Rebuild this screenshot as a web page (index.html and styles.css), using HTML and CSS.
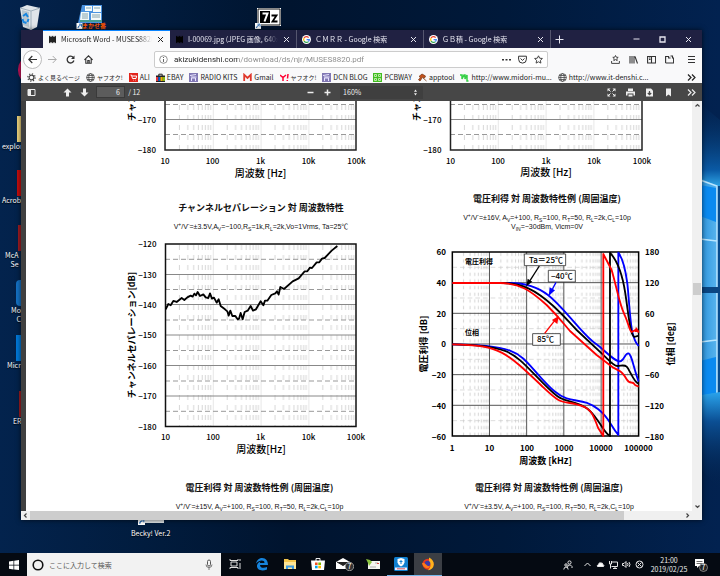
FILE: index.html
```html
<!DOCTYPE html>
<html lang="ja">
<head>
<meta charset="utf-8">
<title>MUSES8820.pdf</title>
<link rel="stylesheet" href="styles.css">
</head>
<body>
<svg class="defs" aria-hidden="true">
  <defs>
    <symbol id="chip" viewBox="0 0 9 9"><path d="M1 2h7v5H1z"/><path d="M1 1.400h7M1 7.600h7" stroke="currentColor" stroke-dasharray="1 .5"/></symbol>
    <symbol id="close" viewBox="0 0 9 9"><path d="M2 2l5 5M7 2L2 7" fill="none" stroke="currentColor"/></symbol>
    <symbol id="google" viewBox="0 0 9 9"><circle cx="4.500" cy="4.500" r="4.500" fill="#fff"/><g fill="none" stroke-width="1.300"><path d="M6.600 2.600A2.800 2.800 0 0 0 2.100 3" stroke="#ea4335"/><path d="M2.100 3a2.800 2.800 0 0 0 0 3" stroke="#fbbc05"/><path d="M2.100 6a2.800 2.800 0 0 0 4.400.6" stroke="#34a853"/><path d="M6.500 6.600q.8-.8.8-2H4.600" stroke="#4285f4"/></g></symbol>
    <symbol id="globe" viewBox="0 0 9 9"><g fill="none" stroke="#444" stroke-width=".8"><circle cx="4.500" cy="4.500" r="3.900"/><ellipse cx="4.500" cy="4.500" rx="1.800" ry="3.900"/><path d="M.6 4.500h7.800M1.200 2.500h6.600M1.200 6.500h6.600"/></g></symbol>
    <symbol id="blog" viewBox="0 0 9 9"><path d="M0 0h9v9H0z" fill="#8178b4"/><path d="M1 2.500l6-1M2 4h5.500M2.500 8V5h4v3" stroke="#e8e4ff" fill="none"/></symbol>
    <symbol id="shortcut" viewBox="0 0 6 6"><path d="M0 0h6v6H0z" fill="#fff"/><path d="M1.500 5q0-2.500 2.500-2.500M2.500 1.200H5v2.500" fill="none" stroke="#2468b0"/></symbol>
    <pattern id="log-grid" width="47.800" height="10" x="165" y="244" patternUnits="userSpaceOnUse">
      <path d="M14.400 1v5M22.800 1v5M28.700 1v5M33.400 1v5M37.200 1v5M40.300 1v5M43.100 1v5M45.600 1v5" stroke="#ccc" stroke-width=".8"/>
      <path d="M.2 0v10" stroke="#ddd"/>
    </pattern>
    <pattern id="log-grid-2" width="47.800" height="10" x="450" y="244" patternUnits="userSpaceOnUse">
      <path d="M14.400 1v5M22.800 1v5M28.700 1v5M33.400 1v5M37.200 1v5M40.300 1v5M43.100 1v5M45.600 1v5" stroke="#ccc" stroke-width=".8"/>
      <path d="M.2 0v10" stroke="#ddd"/>
    </pattern>
    <pattern id="bode-grid" width="111.800" height="20" x="127" y="216" patternUnits="userSpaceOnUse">
      <path d="M33.700 2v10M53.300 2v10M67.300 2v10M78.100 2v10M87 2v10M94.500 2v10M101 2v10M106.700 2v10" stroke="#ccc" stroke-width="2.400"/>
    </pattern>
  </defs>
</svg>

<main class="desktop">
  <svg class="wallpaper" viewBox="684 0 36 553" preserveAspectRatio="none" aria-hidden="true">
    <defs>
      <linearGradient id="beam" x2="0" y2="1"><stop offset="0" stop-color="#03214a" stop-opacity="0"/><stop offset=".8" stop-color="#0a5aa5"/><stop offset="1" stop-color="#37b6f5"/></linearGradient>
      <linearGradient id="below" x2="0" y2="1"><stop offset="0" stop-color="#2aa4ec"/><stop offset=".3" stop-color="#0b4f94"/><stop offset="1" stop-color="#03214a" stop-opacity="0"/></linearGradient>
      <linearGradient id="pane" x2="1" y2="0"><stop offset="0" stop-color="#2b93dc"/><stop offset="1" stop-color="#58b4ee"/></linearGradient>
    </defs>
    <path d="M684 90L720 120V190H684z" fill="url(#beam)"/>
    <path d="M717 186h3v207h-3z" fill="#064a8c"/>
    <path d="M700 178L717 186V288H700z" fill="url(#pane)"/>
    <path d="M700 185l16 3v34l-16-6z" fill="#0a8af0"/>
    <path d="M700 180l17 6v102M700 239l17 2" stroke="#b9e6ff" stroke-width="1.500" fill="none"/>
    <path d="M700 287h20v6h-20z" fill="#0b4682"/>
    <path d="M700 293h17v100l-17 3z" fill="url(#pane)"/>
    <path d="M700 361l16-4v36l-16 3z" fill="#0a8af0"/>
    <path d="M717 293v100M700 342l17-2" stroke="#b9e6ff" stroke-width="1.500"/>
    <path d="M684 398L720 392V490L684 450z" fill="url(#below)"/>
  </svg>

  <div class="shortcut bin"><svg viewBox="0 0 24 26" width="24" height="26"><path d="M2 4L9 1l13 3-3 19-6 3-8-3z" fill="#dfe5e9"/><path d="M2 4l11 3 9-3M13 7v18" stroke="#9fb0bb" fill="none"/><path d="M4 6l7 2v15l-6-2z" fill="#b8c6ce"/><path d="M5 12l3-2 2 3M4.500 15l1 3 3 1M10.500 15l-1 3" stroke="#1686e0" stroke-width="2" fill="none"/></svg></div>
  <div class="shortcut cards"><svg viewBox="0 0 28 24" width="28" height="24"><path d="M6 0h20v18H2z" fill="#4b93e0"/><path d="M9 1h7v5H9zM17 1h8v6h-8zM5 7h8v8H4zM15 8h10v7H15z" fill="#f4fafa"/><path d="M6 9h6M6 11h6M6 13h6M16 10h8M16 12h8M10 3h5M18 3h6" stroke="#6b8d9b" stroke-width=".8"/><path d="M4 16h22" stroke="#42a548"/><use href="#shortcut" x="0" y="18" width="7" height="6"/></svg><span class="orange">まかせ番</span></div>
  <div class="shortcut zip"><svg viewBox="0 0 26 21" width="26" height="21"><path d="M2 0h24v18H2z" fill="#fff"/><path d="M3 1h22v16H3z" stroke="#111" fill="none"/><path d="M5 3h10v12H5z" fill="#000"/><path d="M7.500 5.500h5l-3 8" stroke="#fff" stroke-width="2" fill="none"/><path d="M16.500 7.500h5l-4 6h5" stroke="#000" stroke-width="1.800" fill="none"/><use href="#shortcut" y="15" width="6" height="6"/></svg></div>
  <div class="shortcut s-pink"><i class="art pink"></i></div>
  <div class="shortcut s-explor"><i class="art folder"></i><span>explor</span></div>
  <div class="shortcut s-acro"><i class="art red"></i><span>Acrob</span></div>
  <div class="shortcut s-mcaf"><i class="art crimson"></i><span>McA<br>Se</span></div>
  <div class="shortcut s-moz"><i class="art blue"></i><span>Mo<br>C</span></div>
  <div class="shortcut s-micr"><i class="art azure"></i><span>Micr</span></div>
  <div class="shortcut s-eri"><i class="art crimson"></i><span>ER</span></div>
  <div class="shortcut s-becky"><svg viewBox="0 0 26 12" width="26" height="12"><path d="M7 0h19v8H7z" fill="#dfe3e6"/><use href="#shortcut" y="3" width="7" height="7"/></svg><span>Becky! Ver.2</span></div>

  <section class="window">
    <header class="tabs">
      <div class="tab active"><svg class="ico"><use href="#chip"/></svg><span class="tab-title">Microsoft Word - MUSES8820x</span><button aria-label="閉じる"><svg class="ico"><use href="#close"/></svg></button></div>
      <div class="tab"><svg class="ico dim"><use href="#chip"/></svg><span class="tab-title">I-00069.jpg (JPEG 画像, 640x48</span><button aria-label="閉じる"><svg class="ico"><use href="#close"/></svg></button></div>
      <div class="tab"><svg class="ico"><use href="#google"/></svg><span class="tab-title">ＣＭＲＲ - Google 検索</span><button aria-label="閉じる"><svg class="ico"><use href="#close"/></svg></button></div>
      <div class="tab"><svg class="ico"><use href="#google"/></svg><span class="tab-title">ＧＢ積 - Google 検索</span><button aria-label="閉じる"><svg class="ico"><use href="#close"/></svg></button></div>
      <button class="newtab" aria-label="新しいタブ"><svg class="ico"><path d="M4.500 .5v8M.5 4.500h8" stroke="currentColor" fill="none"/></svg></button>
      <div class="controls">
        <button aria-label="最小化"><svg class="ico"><path d="M1.500 4h6" stroke="currentColor"/></svg></button>
        <button aria-label="最大化"><svg class="ico"><path d="M2 2h5v5H2z" stroke="currentColor" stroke-width="1.300" fill="none"/></svg></button>
        <button aria-label="ウィンドウを閉じる"><svg class="ico"><use href="#close"/></svg></button>
      </div>
    </header>

    <nav class="navbar">
      <button class="back" aria-label="戻る"><svg class="ico"><path d="M9 4.500H.8M4.300 1L.8 4.500 4.300 8" stroke="currentColor" stroke-width="1.200" fill="none"/></svg></button>
      <button class="faint" aria-label="進む"><svg class="ico"><path d="M0 4.500h8.200M4.700 1l3.500 3.500L4.700 8" stroke="currentColor" fill="none"/></svg></button>
      <button aria-label="再読み込み"><svg class="ico"><path d="M7.300 2.500a3.400 3.400 0 1 0 .6 3" stroke="currentColor" stroke-width="1.300" fill="none"/><path d="M8.500 .5v3.500H5z"/></svg></button>
      <button aria-label="ホーム"><svg class="ico"><path d="M.4 4.800L4.500 .8l4.100 4M1.800 4v4.300h5.400V4M3.800 8V5.500h1.400V8" stroke="currentColor" stroke-width="1.100" fill="none"/></svg></button>
      <div class="urlbox">
        <svg class="ico"><circle cx="4.500" cy="4.500" r="3.800" fill="none" stroke="#777" stroke-width=".8"/><path d="M4.500 4v3M4.500 2v1" stroke="#666"/></svg>
        <input type="text" class="url" aria-label="アドレス" value="akizukidenshi.com/download/ds/njr/MUSES8820.pdf">
        <button aria-label="ページ操作"><svg class="ico"><path d="M0 4h2v1.500H0zM3.500 4h2v1.500h-2zM7 4h2v1.500H7z"/></svg></button>
        <button aria-label="Pocket"><svg class="ico"><path d="M.6 1.200h7.800v3a3.900 3.900 0 0 1-7.800 0zM2.500 3.500l2 1.900 2-1.900" stroke="currentColor" fill="none"/></svg></button>
        <button aria-label="ブックマーク"><svg class="ico"><path d="M4.500 .8l1.200 2.400 2.700.3-2 1.900.5 2.700-2.400-1.300-2.400 1.300.5-2.700-2-1.900 2.700-.3z" stroke="currentColor" stroke-width=".9" fill="none"/></svg></button>
      </div>
      <div class="tools">
        <button aria-label="ブックマーク一覧"><svg class="ico"><path d="M4.500 .5l.8 1.700 1.900.2-1.400 1.300.4 1.900-1.700-1-1.700 1 .4-1.900-1.400-1.300 1.900-.2zM.6 6v2.400h7.800V6" stroke="currentColor" stroke-width=".9" fill="none"/></svg></button>
        <button aria-label="ライブラリー"><svg class="ico"><path d="M1 1v7.500M3 1v7.500M5 1v7.500M6 1.500l2.500 7" stroke="currentColor" stroke-width="1.100" fill="none"/></svg></button>
        <button aria-label="サイドバー"><svg class="ico"><path d="M.6 1.500h8v6.500h-8zM4.500 1.500V8M2 3h1.500M2 4.500h1.500" stroke="currentColor" stroke-width="1.100" fill="none"/></svg></button>
        <button aria-label="フォルダー"><svg class="ico"><path d="M.6 8V1.500h3v1.500h2M.6 8h8V3H7M5.500 1h2v2.500" stroke="currentColor" stroke-width="1.100" fill="none"/></svg></button>
        <button class="menu" aria-label="メニュー"><svg class="ico"><path d="M1 1.500h7M1 4.500h7M1 7.500h7" stroke="currentColor" stroke-width="1.100"/></svg></button>
      </div>
    </nav>

    <nav class="bookmarks">
      <a href="#"><svg class="ico"><circle cx="4.500" cy="4.500" r="2.400" stroke="#444" stroke-width="1.200" fill="none"/><circle cx="4.500" cy="4.500" r="3.700" stroke="#444" stroke-width="1.200" stroke-dasharray="1.200 1.700" fill="none"/></svg><span class="ja">よく見るページ</span></a>
      <a href="#"><svg class="ico"><use href="#globe"/></svg><span class="ja">ヤフオク!</span></a>
      <a href="#"><svg class="ico"><path d="M0 0h9v9H0z" fill="#e2231a"/><path d="M1.500 2h1l1 3.500h3.500l.7-2.500H3M4 7.200h.5M6.500 7.200H7" stroke="#fff" fill="none"/></svg>ALI</a>
      <a href="#"><svg class="ico"><path d="M0 2.500h9V9H0z" fill="#222"/><path d="M2.800 3V1.200h3.400V3" stroke="#222" fill="none"/><path d="M0 4h2.300v4H0z" fill="#e53238"/><path d="M2.300 4h2.200v4H2.300z" fill="#0064d2"/><path d="M4.500 4h2.200v4H4.500z" fill="#f5af02"/><path d="M6.700 4H9v4H6.700z" fill="#86b817"/></svg>EBAY</a>
      <a href="#"><svg class="ico"><use href="#blog"/></svg>RADIO KITS</a>
      <a href="#"><svg class="ico"><path d="M1.200 8V1.800L4.500 5l3.300-3.200V8" stroke="#e0392d" stroke-width="1.800" fill="none"/></svg>Gmail</a>
      <a href="#"><svg class="ico"><path d="M0 2l3 2.500L6 2M3 4.500V8M8 1L7.500 5.500M7.300 7v1" stroke="#f03" stroke-width="1.500" fill="none"/></svg><span class="ja">ヤフオク!</span></a>
      <a href="#"><svg class="ico"><use href="#blog"/></svg>DCN BLOG</a>
      <a href="#"><svg class="ico"><path d="M0 0h9v9H0z" fill="#42bd20"/><path d="M1.500 1.500h2v2h-2zM5.500 1.500h2v2h-2zM1.500 5.500h2v2h-2zM5.500 5.500h2v2h-2z" stroke="#d7f5c8" stroke-width=".8" fill="none"/></svg>PCBWAY</a>
      <a href="#"><svg class="ico"><path d="M1 3.500L4 1l3.500 2-1 2-2-.7L2 8 .5 6.800l2-2.300zM5 5l3.500 3" fill="#c5521c" stroke="#7d3c18" stroke-width=".8"/></svg>apptool</a>
      <a href="#"><svg class="ico"><path d="M0 2h2v4l2-4h1v4l2-4v6h1.500" stroke="#35cf45" stroke-width="1.500" fill="none"/></svg>http://www.midori-mu...</a>
      <a href="#"><svg class="ico"><use href="#globe"/></svg>http://www.it-denshi.c...</a>
      <button class="more" aria-label="続き"><svg class="ico"><path d="M1 1.500l3 3-3 3M5 1.500l3 3-3 3" stroke="currentColor" stroke-width="1.200" fill="none"/></svg></button>
    </nav>

    <div class="pdfbar">
      <button aria-label="サイドバー切替"><svg class="ico"><path d="M1 1.500h7v6H1z" stroke="currentColor" fill="none"/><path d="M1 1.500h3v6H1z"/></svg></button>
      <button class="up" aria-label="前のページ"><svg class="ico"><path d="M4.500 .5l4 4H6v4H3v-4H.5z"/></svg></button>
      <button class="down" aria-label="次のページ"><svg class="ico"><path d="M4.500 8.500l4-4H6v-4H3v4H.5z"/></svg></button>
      <label class="pageno"><input type="text" value="6" aria-label="ページ">  / 12</label>
      <div class="zoom">
        <button aria-label="縮小"><svg class="ico"><path d="M1.500 4.500h6" stroke="currentColor" stroke-width="1.500"/></svg></button>
        <button aria-label="拡大"><svg class="ico"><path d="M1.500 4.500h6M4.500 1.500v6" stroke="currentColor" stroke-width="1.500"/></svg></button>
        <div class="scale"><select aria-label="倍率"><option>160%</option></select><svg class="ico"><path d="M4.500 1.500L6 3.800H3zM4.500 7.500L6 5.200H3z"/></svg></div>
      </div>
      <div class="pdftools">
        <button aria-label="全画面"><svg class="ico"><path d="M.5 .5h3l-3 3zM8.500 .5v3l-3-3zM.5 8.500v-3l3 3zM8.500 8.500h-3l3-3z"/><path d="M1 1l2.500 2.500M8 1L5.500 3.500M1 8l2.500-2.500M8 8L5.500 5.500" stroke="currentColor"/></svg></button>
        <button aria-label="印刷"><svg class="ico"><path d="M2 .5h5V3H2zM0 3.500h9v4H7.500V5.500h-6v2H0zM2.500 6.500h4v2h-4z"/></svg></button>
        <button aria-label="保存"><svg class="ico"><path d="M1 .5h5l2 2v6H1z"/><path d="M4.500 3v3.500M2.800 5l1.700 1.700L6.200 5" stroke="#474747" stroke-width="1.200" fill="none"/></svg></button>
        <button aria-label="現在の表示"><svg class="ico"><path d="M2 .5h5v8L4.500 6.500 2 8.500z"/></svg></button>
        <button class="last" aria-label="ツール"><svg class="ico"><path d="M1 1.500l3 3-3 3M5 1.500l3 3-3 3" stroke="currentColor" stroke-width="1.200" fill="none"/></svg></button>
      </div>
    </div>

    <div class="viewer">
      <article class="page">
        <div class="col left">
          <svg class="chart" viewBox="26 101 350 79" role="img">
            <rect x="165" y="90" width="191" height="60" fill="url(#log-grid)"/>
            <path d="M165 119.500h191" stroke="#888"/>
            <path d="M165 104.500h191M165 134.500h191" stroke="#999" stroke-dasharray="5 3"/>
            <path d="M165 90v60h191V90" stroke="#222" stroke-width="1.500" fill="none"/>
            <g class="num end"><text x="156" y="122.500">−170</text><text x="156" y="153">−180</text></g>
            <g class="num mid"><text x="165" y="163.500">10</text><text x="212.500" y="163.500">100</text><text x="260.500" y="163.500">1k</text><text x="308.500" y="163.500">10k</text><text x="356.500" y="163.500">100k</text></g>
            <text class="axis big mid" x="260.500" y="177">周波数 [Hz]</text>
            <text class="axis" transform="translate(135 121) rotate(-90)">チャン</text>
          </svg>
          <h2>チャンネルセパレーション 対 周波数特性</h2>
          <p>V<sup>+</sup>/V<sup>-</sup>=±3.5V,A<sub>V</sub>=−100,R<sub>S</sub>=1k,R<sub>L</sub>=2k,Vo=1Vrms, Ta=25℃</p>
          <svg class="chart" viewBox="26 236 350 230" role="img">
            <rect x="165" y="244" width="191" height="182" fill="url(#log-grid)"/>
            <path d="M165 274.500h191M165 304.500h191M165 335h191M165 365.500h191M165 396h191" stroke="#888"/>
            <path d="M165 259.300h191M165 289.500h191M165 320h191M165 350.500h191M165 381h191M165 411.300h191" stroke="#999" stroke-dasharray="5 3"/>
            <path d="M165.500 244h190.500v182.500H165.500z" stroke="#111" stroke-width="1.500" fill="none"/>
            <g transform="translate(150 190) scale(.3333)"><path d="M47 358L55 342 62 346 70 333 80 336 95 324 103 330 112 322 122 317 128 320 133 311 138 316 143 306 150 318 160 313 167 322 175 324 180 310 186 326 192 323 200 338 206 328 212 348 225 358 232 364 236 377 241 362 247 378 256 378 263 388 267 386 272 369 278 388 284 366 293 362 302 348 309 362 318 358 332 334 340 346 345 332 352 332 364 315 376 310 381 304 386 314 391 291 402 297 428 274 446 265 464 244 472 244 480 233 486 234 500 217 508 217 516 206 524 204 545 182 562 168" stroke="#000" stroke-width="5.500" stroke-linejoin="round" fill="none"/></g>
            <g class="num end"><text x="156.500" y="247">−120</text><text x="156.500" y="277.500">−130</text><text x="156.500" y="307.500">−140</text><text x="156.500" y="338">−150</text><text x="156.500" y="368.500">−160</text><text x="156.500" y="399">−170</text><text x="156.500" y="429.500">−180</text></g>
            <g class="num mid"><text x="165.500" y="440">10</text><text x="213" y="440">100</text><text x="260.500" y="440">1k</text><text x="308.500" y="440">10k</text><text x="356" y="440">100k</text></g>
            <text class="axis big mid" x="261" y="453">周波数[Hz]</text>
            <text class="axis mid" transform="translate(135 335) rotate(-90)">チャンネルセパレーション[dB]</text>
          </svg>
          <h2 class="next">電圧利得 対 周波数特性例 (周囲温度)</h2>
          <p>V<sup>+</sup>/V<sup>-</sup>=±15V, A<sub>V</sub>=+100, R<sub>S</sub>=100, R<sub>T</sub>=50, R<sub>L</sub>=2k,C<sub>L</sub>=10p</p>
        </div>

        <div class="col right">
          <svg class="chart" viewBox="376 101 316 79" role="img">
            <rect x="450" y="90" width="191" height="60" fill="url(#log-grid-2)"/>
            <path d="M450 119.500h192" stroke="#888"/>
            <path d="M450 104.500h192M450 134.500h192" stroke="#999" stroke-dasharray="5 3"/>
            <path d="M450.500 90v60H642V90" stroke="#222" stroke-width="1.500" fill="none"/>
            <g class="num end"><text x="441.500" y="122.500">−170</text><text x="441.500" y="153">−180</text></g>
            <g class="num mid"><text x="450.500" y="163.500">10</text><text x="498" y="163.500">100</text><text x="546" y="163.500">1k</text><text x="594" y="163.500">10k</text><text x="642" y="163.500">100k</text></g>
            <text class="axis big mid" x="546" y="176">周波数 [Hz]</text>
            <text class="axis" transform="translate(420 121) rotate(-90)">チャン</text>
          </svg>
          <h2>電圧利得 対 周波数特性例 (周囲温度)</h2>
          <p>V<sup>+</sup>/V<sup>-</sup>=±16V, A<sub>V</sub>=+100, R<sub>S</sub>=100, R<sub>T</sub>=50, R<sub>L</sub>=2k,C<sub>L</sub>=10p<br>V<sub>IN</sub>=−30dBm, Vicm=0V</p>
          <svg class="chart" viewBox="376 236 316 230" role="img">
            <g transform="translate(410 180) scale(.3333)" fill="none">
              <path d="M127 216h559v552H127z" fill="url(#bode-grid)"/>
              <path d="M127 262h559M127 354h559M127 446h559M127 538h559M127 630h559M127 722h559" stroke="#ccc" stroke-width="2" stroke-dasharray="14 9"/>
              <path d="M127 308h559M127 400h559M127 492h559M127 584h559M127 676h559" stroke="#333" stroke-width="2.500"/>
              <path d="M238.500 216v552M350 216v552M461.500 216v552M573.500 216v552" stroke="#333" stroke-width="2.500"/>
              <path d="M127 216h559v552H127z" stroke="#000" stroke-width="4.500"/>
              <g stroke-width="5.500" stroke-linejoin="round">
                <path stroke="#00f" d="M127 309H300C350 309 385 322 415 346S465 396 510 446 550 483 578 508C600 528 618 545 630 544S645 519 655 520 670 563 686 605"/>
                <path stroke="#00f" d="M127 493C200 493 260 498 300 512S360 558 390 590 440 645 470 655 530 660 565 688 600 735 625 765V218C642 240 648 280 652 310S660 430 668 460 676 485 686 498"/>
                <path stroke="#000" d="M127 309H280C335 310 375 328 430 378 470 415 480 430 500 450L575 520C595 538 610 558 622 558S642 553 650 560 673 610 686 611"/>
                <path stroke="#000" d="M127 493C200 493 245 498 285 513S350 560 400 610 450 655 490 667 540 690 560 717 585 760 600 768V218C620 240 637 280 646 340S658 440 666 460 676 466 686 468"/>
                <path stroke="#f00" d="M127 309H270C330 310 360 330 410 375 450 415 460 430 480 453L560 525 610 563C635 575 640 580 650 598S668 600 675 615L686 620"/>
                <path stroke="#f00" d="M127 493C200 494 240 500 275 518S345 570 400 622 450 662 500 673 550 710 565 745L580 768V222L605 270C622 330 628 370 642 400S658 453 665 456L680 448 686 458"/>
              </g>
              <g stroke="#333" stroke-width="2.500" fill="#fff"><path d="M343 222h124v35H343zM415 271h81v35h-81zM368 461h83v35h-83z"/></g>
              <g stroke-width="4"><path d="M388 258L358 305" stroke="#000"/><path d="M438 307L426 330" stroke="#00f"/><path d="M404 460L434 422" stroke="#f00"/></g>
              <path d="M349 319l4-23 14 9z" fill="#000"/><path d="M416 348l3-26 16 9z" fill="#00f"/><path d="M446 408l-4 24-16-12z" fill="#f00"/><path d="M678 440l10 16h-14z" fill="#f00"/>
            </g>
            <g class="num"><text x="529" y="263">Ta＝25℃</text><text x="551" y="279">−40℃</text><text x="537" y="342">85℃</text></g>
            <g class="inner"><text x="465" y="264">電圧利得</text><text x="465" y="335">位相</text></g>
            <g class="num bold end"><text x="446" y="255">60</text><text x="446" y="286">40</text><text x="446" y="316.500">20</text><text x="446" y="347">0</text><text x="446" y="378">−20</text><text x="446" y="408.500">−40</text><text x="446" y="439.500">−60</text></g>
            <g class="num bold"><text x="645" y="255">180</text><text x="645" y="286">120</text><text x="645" y="316.500">60</text><text x="645" y="347">0</text><text x="645" y="378">−60</text><text x="645" y="408.500">−120</text><text x="645" y="439.500">−180</text></g>
            <g class="num bold mid"><text x="452" y="450.500">1</text><text x="489.500" y="450.500">10</text><text x="527" y="450.500">100</text><text x="564" y="450.500">1000</text><text x="601" y="450.500">10000</text><text x="638.500" y="450.500">100000</text></g>
            <text class="axis mid" x="545.500" y="463.500">周波数 [kHz]</text>
            <text class="axis mid" transform="translate(427 344) rotate(-90)">電圧利得 [dB]</text>
            <text class="axis mid" transform="translate(674 344) rotate(-90)">位相 [deg]</text>
          </svg>
          <h2 class="next">電圧利得 対 周波数特性例 (周囲温度)</h2>
          <p>V<sup>+</sup>/V<sup>-</sup>=±3.5V, A<sub>V</sub>=+100, R<sub>S</sub>=100, R<sub>T</sub>=50, R<sub>L</sub>=2k,C<sub>L</sub>=10p</p>
        </div>
      </article>
      <div class="vscroll"><svg class="ico"><path d="M2.500 5.500l2-2 2 2" stroke="#444" stroke-width="1.200" fill="none"/></svg><i></i><svg class="ico"><path d="M2.500 3.500l2 2 2-2" stroke="#444" stroke-width="1.200" fill="none"/></svg></div>
    </div>
    <div class="hscroll"><svg class="ico"><path d="M5.500 2.500l-2 2 2 2" stroke="#444" stroke-width="1.200" fill="none"/></svg><i></i><svg class="ico"><path d="M3.500 2.500l2 2-2 2" stroke="#444" stroke-width="1.200" fill="none"/></svg></div>
  </section>
</main>

<footer class="taskbar">
  <button class="start" aria-label="スタート"><svg viewBox="0 0 10 10" width="10" height="10"><path d="M0 1.500l4.500-.7v4H0zM5.200 .7L10 0v4.800H5.200zM0 5.400h4.500v4L0 8.700zM5.200 5.400H10V10l-4.800-.6z" fill="#fff"/></svg></button>
  <label class="search"><svg viewBox="0 0 12 12" width="12" height="12"><circle cx="6" cy="6" r="4.800" fill="none" stroke="#111" stroke-width="1.600"/></svg><input type="text" placeholder="ここに入力して検索" aria-label="検索"><svg viewBox="0 0 8 12" width="8" height="12"><rect x="2.500" y="1" width="3" height="6" rx="1.500" fill="none" stroke="#555"/><path d="M1 5.500q0 3 3 3t3-3M4 8.500V11" fill="none" stroke="#555" stroke-width=".8"/></svg></label>
  <div class="apps">
    <button aria-label="タスクビュー"><svg viewBox="0 0 14 14" width="14" height="14"><path d="M3 5h6v4H3zM2 2v1.500h8V2M2 12v-1.500h8V12M12 2v2M12 6v6" stroke="#ddd" stroke-width="1" fill="none"/></svg></button>
    <button aria-label="Edge"><svg viewBox="0 0 14 14" width="14" height="14"><path d="M1 6.500C2 2.500 4.500 1 7.200 1 11 1 13 4 13 8H5c0 3 4 3.500 7 2v2.500C6 15 1.500 12.500 2 8.500 2.300 6.500 3.600 5.300 5.500 4.500 5 5 5 5.500 5 6h4.500C9.500 2.500 4 3 1 6.500z" fill="#1683dc"/></svg></button>
    <button aria-label="エクスプローラー"><svg viewBox="0 0 14 14" width="14" height="14"><path d="M1 2h4l1 1h7v9H1z" fill="#f5c64c"/><path d="M1 5h12v7H1z" fill="#ffe595"/><path d="M3 12V8.500h8V12H9v-1.500H5V12z" fill="#3d9ae0"/></svg></button>
    <button aria-label="ストア"><svg viewBox="0 0 14 14" width="14" height="14"><path d="M5 4V1.500h4V4" stroke="#eee" fill="none"/><path d="M0 3.500h14l-1 9.500H1z" fill="#fff"/><path d="M4 5.500h2.600V8H4z" fill="#f25022"/><path d="M7.300 5.500H10V8H7.300z" fill="#7fba00"/><path d="M4 8.700h2.600v2.600H4z" fill="#00a4ef"/><path d="M7.300 8.700H10v2.600H7.300z" fill="#ffb900"/></svg></button>
    <button aria-label="メール"><svg viewBox="0 0 18 14" width="18" height="14"><path d="M0 5l7-4 7 4v7H0z" fill="#fff"/><path d="M1 5l6 3.500L13 5" fill="#222" stroke="#222"/><circle cx="13.500" cy="9.500" r="4.200" fill="#333" stroke="#aaa" stroke-width=".8"/><text x="13.500" y="12" class="badge">7</text></svg></button>
    <button aria-label="地図"><svg viewBox="0 0 14 14" width="14" height="14"><path d="M2 4h12v8H2z" fill="#f5f5f0"/><path d="M4 10h6M9 6h3" stroke="#aaa"/><path d="M0 2l4 1 2 2-3 4-1-3z" fill="#8cc63f"/><path d="M11 6.500h2" stroke="#d44"/></svg></button>
    <button class="running" aria-label="セキュリティ"><svg viewBox="0 0 14 14" width="14" height="14"><rect width="14" height="14" rx="1.500" fill="#1180d0"/><path d="M3.500 2L7 1l3.500 1v3.500Q10 8 7 9.500 4 8 3.500 5.500z" fill="#fff"/><path d="M7 3v4M5.500 4.500h3" stroke="#1180d0"/><path d="M1 10.500h12V13H1z" fill="#eef"/><path d="M3 11.800h8" stroke="#c33" stroke-width=".8"/></svg></button>
    <button class="running current" aria-label="Firefox"><svg viewBox="0 0 14 14" width="14" height="14"><circle cx="7" cy="7.200" r="5.500" fill="#e8361f"/><path d="M8 .5c3 1.500 5 4 4.800 7A6 6 0 0 1 7 13.200C9 11 11 8 8 5z" fill="#ffb31c"/><circle cx="6.500" cy="6.500" r="2.800" fill="#3d3ba8"/><path d="M1 6q2-1 4 1.500T9 9q-1 3-4 2T1 6z" fill="#ff7a18"/></svg></button>
  </div>
  <div class="tray">
    <svg class="people" viewBox="0 0 10 10" width="10" height="10"><circle cx="6.500" cy="2.500" r="1.600"/><circle cx="3" cy="5" r="1.200"/><path d="M9 8V6.500Q8 4.500 5.500 5L4 8M.8 9.500Q1 7 3 7t2.200 2.500"/></svg>
    <svg class="ico"><path d="M1.500 6l3-3 3 3"/></svg>
    <svg class="ico"><path d="M1.500 6.500h6q1-1-.5-2Q6.500 2.500 5 3q-2-1-2.500 1.500-2 1-1 2z" fill="#fff"/></svg>
    <svg class="ico"><path d="M2 2h6.500v4.500h-6M4 8.500h4M6 6.500v2M.5 1v3h2V1M1.500 4v4.500"/></svg>
    <svg class="ico"><path d="M.5 3.500h1.500l2-2v6l-2-2H.5zM5.500 3q1 1.500 0 3M7 2q2 2.500 0 5"/></svg>
    <svg class="ico"><circle cx="4.500" cy="4.500" r="3.500"/><path d="M2.500 2.500l4 4M6.500 2.500l-4 4"/></svg>
    <time>21:00<br>2019/02/25</time>
    <svg class="note" viewBox="0 0 14 14" width="14" height="14"><path d="M1 1h9v7H5l-2 2V8H1z" fill="#fff"/><path d="M2.500 3.500h6M2.500 5.500h6" stroke="#444" stroke-width=".8"/><circle cx="9.500" cy="9.500" r="4" fill="#222" stroke="#999" stroke-width=".8"/><text x="9.500" y="12" class="badge">7</text></svg>
  </div>
</footer>
</body>
</html>
```
FILE: styles.css
```css
* { box-sizing: border-box; }

html, body { height: 100%; }

body {
  margin: 0;
  display: flex;
  flex-direction: column;
  overflow: hidden;
  font-family: "Noto Sans CJK JP", sans-serif;
  font-size: 7px;
  line-height: 9px;
  color: #222;
}

button, input, select {
  margin: 0;
  padding: 0;
  border: 0;
  background: none;
  color: inherit;
  font: inherit;
  min-width: 0;
}

button {
  display: flex;
  align-items: center;
  justify-content: center;
}

svg { flex: none; }

.defs { position: absolute; width: 0; height: 0; }

.ico {
  width: 9px;
  height: 9px;
  fill: currentColor;
}

/* Desktop */
.desktop {
  position: relative;
  flex: 1;
  min-height: 0;
  overflow: hidden;
  background: linear-gradient(90deg, #03234d 0%, #011c3e 20%, #00142f 40%, #00193a 70%, #022250 100%);
}

.wallpaper {
  position: absolute;
  right: 0;
  top: 0;
  width: 36px;
  height: 100%;
}

.shortcut {
  position: absolute;
  display: flex;
  flex-direction: column;
  color: #fff;
  white-space: nowrap;
  text-align: center;
}

.shortcut span { text-shadow: 0 1px 1px #000; }
.bin { left: 18px; top: 4px; }
.cards { left: 76px; top: 5px; }
.zip { left: 255px; top: 8px; }
.cards .orange {
  position: absolute;
  left: 6px;
  top: 16px;
  color: #f50;
  font-size: 6px;
  font-weight: bold;
  text-shadow: none;
}

.art { width: 20px; height: 26px; margin-left: 15px; }
.pink { background: #c8145a; border-radius: 50%; }
.folder { background: #ecd27c; }
.red { background: #c40d0d; }
.crimson { background: #9e1c22; }
.blue { background: #1471c4; border-radius: 4px; }
.azure { background: #0078d7; }
.s-pink { left: 3px; top: 57px; }
.s-explor { left: 2px; top: 116px; }
.s-acro { left: 2px; top: 170px; }
.s-mcaf { left: 3px; top: 225px; }
.s-moz { left: 1px; top: 280px; }
.s-micr { left: 1px; top: 335px; }
.s-eri { left: 4px; top: 391px; }
.s-explor span, .s-acro span, .s-micr span, .s-eri span { text-align: left; }
.s-mcaf span, .s-moz span { text-align: right; align-self: flex-start; }
.s-mcaf span { margin-left: 2px; }
.s-micr span { margin-left: 6px; }
.s-moz span { margin-left: 10px; }
.s-eri span { margin-left: 9px; }
.s-becky { left: 131px; top: 515px; align-items: center; gap: 2px; }

/* Browser window */
.window {
  position: absolute;
  inset: 30px 18px 33px 21px;
  display: flex;
  flex-direction: column;
  overflow: hidden;
  background: #f9f9fa;
  box-shadow: 0 0 5px #000a;
}

.tabs {
  display: flex;
  flex: none;
  height: 18px;
  padding-left: 22px;
  background: #202142;
  color: #e6e6f0;
}

.tab {
  display: flex;
  flex: 0 1 127px;
  align-items: center;
  gap: 4px;
  min-width: 0;
  padding: 0 5px;
  border-right: 1px solid #55566f;
}

.tab.active {
  border-top: 1px solid #0a84ff;
  border-right: 0;
  background: #f9f9fa;
  color: #222;
}

.tab-title {
  flex: 1;
  overflow: hidden;
  white-space: nowrap;
  mask-image: linear-gradient(90deg, #000 85%, transparent);
}

.dim { color: #000; }
.newtab { width: 17px; }
.controls { display: flex; gap: 17px; margin-left: auto; padding-right: 9px; }

.navbar {
  display: flex;
  flex: none;
  align-items: center;
  gap: 9px;
  height: 23px;
  padding: 0 6px 0 2px;
  color: #333;
}

.back {
  width: 19px;
  height: 19px;
  margin-right: -3px;
  border: 1px solid #bbb;
  border-radius: 50%;
  background: #fff;
}

.faint { color: #aaa; }

.urlbox {
  display: flex;
  flex: 0 1 394px;
  align-items: center;
  gap: 7px;
  height: 17px;
  margin-left: 52px;
  padding: 0 4px;
  border: 1px solid #ccc;
  border-radius: 2px;
  background: #fff;
}

.url {
  flex: 1;
  margin-left: -1px;
  background: linear-gradient(90deg, #222 64px, #888 64px);
  background-clip: text;
  color: transparent;
  font-family: Roboto, sans-serif;
  font-size: 8px;
  line-height: 12px;
}

.tools { display: flex; gap: 9px; margin-left: auto; }
.menu { padding-left: 4px; }

.bookmarks {
  display: flex;
  flex: none;
  align-items: center;
  gap: 6px;
  height: 12px;
  padding: 0 6px;
}

.bookmarks a {
  display: flex;
  flex: none;
  align-items: center;
  gap: 2px;
  color: inherit;
  text-decoration: none;
  white-space: nowrap;
}

.ja { font-size: 6px; }
.more { margin-left: auto; }

/* PDF toolbar */
.pdfbar {
  position: relative;
  display: flex;
  flex: none;
  align-items: center;
  height: 18px;
  padding: 0 6px;
  background: #474747;
  color: #eee;
}

.up { margin-left: 27px; }
.down { margin-left: 8px; }
.pageno { margin-left: 7px; white-space: pre; }

.pageno input {
  width: 29px;
  height: 12px;
  padding-right: 4px;
  border: 1px solid #3a3a3a;
  background: #5c5c5c;
  text-align: right;
}

.zoom { display: flex; flex: 1; align-items: center; justify-content: center; gap: 8px; padding-right: 18px; }
.scale { display: flex; align-items: center; width: 83px; height: 13px; padding: 0 3px; background: #3f3f3f; }
.scale select { flex: 1; appearance: none; }
.pdftools { display: flex; gap: 10px; }
.last { padding-left: 4px; }

/* Document */
.viewer {
  display: flex;
  flex: 1;
  min-height: 0;
  padding-left: 5px;
  overflow: hidden;
  background: #404040;
}

.page {
  display: grid;
  flex: 1;
  grid-template-columns: 350fr 316fr;
  align-items: start;
  overflow: hidden;
  background: #fff;
  color: #111;
  text-align: center;
}

.chart { display: block; width: 100%; height: auto; }
.left h2, .left p { padding-left: 120px; }
.right h2, .right p { padding-left: 26px; }

h2 {
  margin: 22px 0 8px;
  font-size: 9px;
  font-weight: bold;
  line-height: 12px;
  white-space: nowrap;
}

.right h2 { margin-top: 13px; }
.left .next, .right .next { margin-top: 16px; }
.left .next, .left .next + p { padding-left: 117px; }
.right .next, .right .next + p { padding-left: 30px; }

p {
  margin: 0 0 4px;
  font-family: "Liberation Sans", "Noto Sans CJK JP", sans-serif;
  font-size: 7px;
  line-height: 10px;
  white-space: nowrap;
}

.right p { margin-bottom: 5px; line-height: 9px; }
sup, sub { font-size: 5px; line-height: 0; }

.num { font-size: 8px; font-weight: 500; }
.bold { font-weight: bold; }
.inner { font-size: 7px; font-weight: bold; }
.axis { font-size: 9px; font-weight: bold; }
.big { font-size: 10px; font-weight: 500; }
.end { text-anchor: end; }
.mid { text-anchor: middle; }

.vscroll, .hscroll { display: flex; flex: none; background: #f0f0f0; }
.vscroll { flex-direction: column; align-items: center; justify-content: space-between; width: 10px; }
.vscroll i { width: 8px; height: 12px; background: #cdcdcd; margin-bottom: 34px; }
.hscroll { align-items: center; height: 9px; padding-right: 10px; }
.hscroll i { flex: 1; height: 9px; margin-right: 59px; background: #cdcdcd; }

/* Taskbar */
.taskbar {
  display: flex;
  flex: none;
  height: 23px;
  background: #050a12;
  color: #eee;
}

.start { width: 27px; }

.search {
  display: flex;
  align-items: center;
  gap: 5px;
  width: 194px;
  padding: 0 8px 0 5px;
  background: #f2f2f2;
}

.search input { flex: 1; line-height: 12px; }
.search input::placeholder { color: #555; opacity: 1; }
.apps { display: flex; width: 221px; }
.apps button { flex: 1; border-bottom: 1px solid transparent; }
.apps .running { border-color: #76b9ed; }
.apps .current { background: #3b3e44; }
.badge { fill: #fff; font-size: 7px; text-anchor: middle; }

.tray {
  display: flex;
  align-items: center;
  gap: 4px;
  margin-left: auto;
  padding-right: 12px;
}

.tray .ico, .people { fill: none; stroke: #e6e6e6; stroke-width: 1; }
.people { margin-right: 6px; }
.tray time { width: 42px; text-align: center; }
```
